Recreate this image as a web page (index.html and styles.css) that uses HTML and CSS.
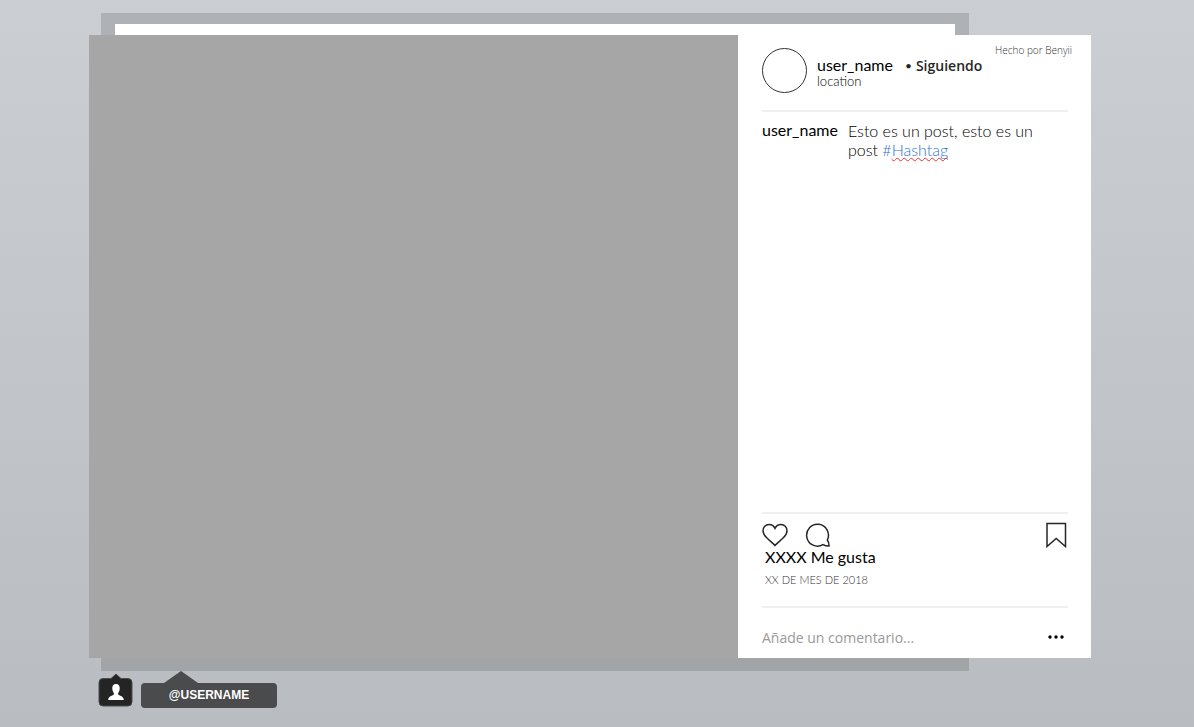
FILE: index.html
```
<!DOCTYPE html>
<html lang="es">
<head>
    <meta charset="UTF-8">
    <meta name="viewport" content="width=device-width, initial-scale=1.0">
    <title>Post</title>
    <link rel="stylesheet" href="styles.css">
</head>
<body>
    <main class="stage">
        <div class="backdrop"></div>

        <article class="post">
            <div class="photo"></div>

            <section class="panel">
                <span class="credit">Hecho por Benyii</span>

                <header class="post-header">
                    <div class="avatar"></div>
                    <div class="author">
                        <div class="author-row">
                            <a class="user" href="#">user_name</a>
                            <span class="dot">•</span>
                            <button class="follow" type="button">Siguiendo</button>
                        </div>
                        <div class="location">location</div>
                    </div>
                </header>

                <div class="caption">
                    <a class="user" href="#">user_name</a>
                    <p class="caption-text">Esto es un post, esto es un post <a class="hashtag" href="#">#<span class="misspelled">Hashtag</span></a></p>
                </div>

                <div class="summary">
                    <div class="actions">
                        <button class="icon-button" type="button" aria-label="Me gusta">
                            <svg width="26" height="24" viewBox="0 0 26 24"><path d="M13 22.500C11.500 20.800 8 18 4.700 14.800C2.300 12.500 1 10.600 1 7.800C1 4.200 3.600 1.500 7 1.500C9.700 1.500 11.800 2.900 13 5.300C14.200 2.900 16.300 1.500 19 1.500C22.400 1.500 25 4.200 25 7.800C25 10.600 23.700 12.500 21.300 14.800C18 18 14.500 20.800 13 22.500Z"/></svg>
                        </button>
                        <button class="icon-button" type="button" aria-label="Comentar">
                            <svg width="26" height="24" viewBox="0 0 26 24"><path d="M22.300 17A10.900 10.900 0 1 0 18 21.600C19.800 22.700 22 23 24 23C24.100 20.800 23.500 18.600 22.300 17Z"/></svg>
                        </button>
                        <button class="icon-button save" type="button" aria-label="Guardar">
                            <svg width="22" height="26" viewBox="0 0 22 26"><path d="M1 1.500H19.500V24.500L10.200 16.500L1 24.500Z"/></svg>
                        </button>
                    </div>
                    <div class="likes">XXXX Me gusta</div>
                    <div class="date">XX DE MES DE 2018</div>
                </div>

                <form class="comment-form">
                    <input class="comment-input" type="text" placeholder="Añade un comentario..." aria-label="Añade un comentario">
                    <button class="more" type="button" aria-label="Más opciones">
                        <svg width="16" height="4" viewBox="0 0 16 4"><circle cx="2" cy="2" r="1.700"/><circle cx="8" cy="2" r="1.700"/><circle cx="14" cy="2" r="1.700"/></svg>
                    </button>
                </form>
            </section>
        </article>
    </main>

    <footer class="tag-bar">
        <button class="tag-icon" type="button" aria-label="Personas etiquetadas">
            <svg width="36" height="36" viewBox="0 0 36 36">
                <path class="tag-shape" d="M5 5.500H13L18 1L23 5.500H30Q34 5.500 34 9.500V29Q34 33 30 33H5Q1 33 1 29V9.500Q1 5.500 5 5.500Z"/>
                <path class="tag-person" d="M18 11C20.800 11 22 13 21.700 16C21.500 18.500 20 19.500 20 21C20 22.800 25.800 22.500 25.800 27H10.200C10.200 22.500 16 22.800 16 21C16 19.500 14.500 18.500 14.300 16C14 13 15.200 11 18 11Z"/>
            </svg>
        </button>
        <a class="tag-label" href="#">@USERNAME</a>
    </footer>
</body>
</html>
```
FILE: styles.css
```
* {
    box-sizing: border-box;
}

body {
    margin: 0;
    min-height: 100vh;
    padding: 35px 103px 0 89px;
    font-family: Lato, sans-serif;
    color: #000;
    background: linear-gradient(#cbced3, #b9bcc1);
}

a {
    color: inherit;
    text-decoration: none;
}

button {
    padding: 0;
    border: none;
    background: none;
    font: inherit;
    cursor: pointer;
}

svg {
    display: block;
}

.stage {
    position: relative;
}

/* frame that shows from behind the post */
.backdrop {
    position: absolute;
    top: -22px;
    right: 122px;
    bottom: -13px;
    left: 12px;
    border: solid transparent;
    border-width: 11px 14px 13px;
    background:
        linear-gradient(#fff, #fff) padding-box,
        linear-gradient(#aeb2b6, #a1a5a8) border-box;
}

.post {
    position: relative;
    display: grid;
    grid-template-columns: 1fr 353px;
    background: #fff;
}

.photo {
    aspect-ratio: 649 / 623;
    background: #a6a6a6;
}

.panel {
    position: relative;
    display: flex;
    flex-direction: column;
    padding: 0 23px 0 24px;
}

.credit {
    position: absolute;
    top: 8px;
    right: 19px;
    font-family: "Open Sans", sans-serif;
    font-size: 10px;
    font-weight: 300;
    line-height: 14px;
    color: #333;
}

.post-header {
    display: flex;
    gap: 10px;
    height: 77px;
    padding-top: 13px;
    border-bottom: 2px solid #f0f0f0;
}

.avatar {
    width: 45px;
    height: 45px;
    border: 1px solid #333;
    border-radius: 50%;
}

.author {
    padding-top: 8px;
}

.author-row {
    display: flex;
    align-items: center;
    height: 18px;
}

.user {
    font-size: 16px;
    line-height: 18px;
}

.dot {
    margin: 0 4px 0 12px;
    font-size: 12px;
    color: #262626;
}

.follow {
    font-family: "Open Sans", sans-serif;
    font-size: 14px;
    font-weight: 600;
    color: #262626;
}

.location {
    font-size: 13px;
    font-weight: 300;
    line-height: 14px;
}

.caption {
    display: flex;
    gap: 10px;
    padding: 9px 10px 0 0;
}

.caption-text {
    margin: 0;
    font-size: 16px;
    font-weight: 300;
    line-height: 19px;
}

.hashtag {
    color: #2e75d0;
}

.misspelled {
    text-decoration: underline wavy #e33 1px;
    text-decoration-skip-ink: none;
}

.summary {
    margin-top: auto;
    border-top: 2px solid #f0f0f0;
    border-bottom: 2px solid #f0f0f0;
    height: 96px;
    padding-top: 8px;
}

.actions {
    display: flex;
    align-items: center;
    gap: 17px;
    height: 26px;
}

.icon-button svg {
    fill: none;
    stroke: #262626;
    stroke-width: 1.5;
}

.save {
    margin-left: auto;
}

.likes {
    padding-left: 3px;
    font-size: 16px;
    line-height: 18px;
}

.date {
    padding: 5px 0 0 3px;
    font-size: 11px;
    font-weight: 300;
    line-height: 18px;
    color: #333;
}

.comment-form {
    display: flex;
    align-items: center;
    height: 50px;
    padding: 8px 4px 0 0;
}

.comment-input {
    flex: 1;
    min-width: 0;
    padding: 0;
    border: none;
    outline: none;
    background: none;
    font-family: "Open Sans", sans-serif;
    font-size: 14px;
}

.comment-input::placeholder {
    color: #999;
}

.tag-bar {
    display: flex;
    gap: 7px;
    padding: 15px 0 0 9px;
}

.tag-shape {
    fill: #242424;
    stroke: #4b4c4e;
}

.tag-person {
    fill: #fff;
}

.tag-label {
    position: relative;
    width: 136px;
    height: 25px;
    margin-top: 10px;
    border-radius: 4px;
    background: #4a4b4c;
    color: #fff;
    font-family: "Liberation Sans", Arial, sans-serif;
    font-size: 12px;
    font-weight: bold;
    line-height: 25px;
    text-align: center;
}

/* arrow of the label */
.tag-label::before {
    content: "";
    position: absolute;
    top: -12px;
    left: 23px;
    border: solid transparent;
    border-width: 0 17px 12px;
    border-bottom-color: #4a4b4c;
}
```
